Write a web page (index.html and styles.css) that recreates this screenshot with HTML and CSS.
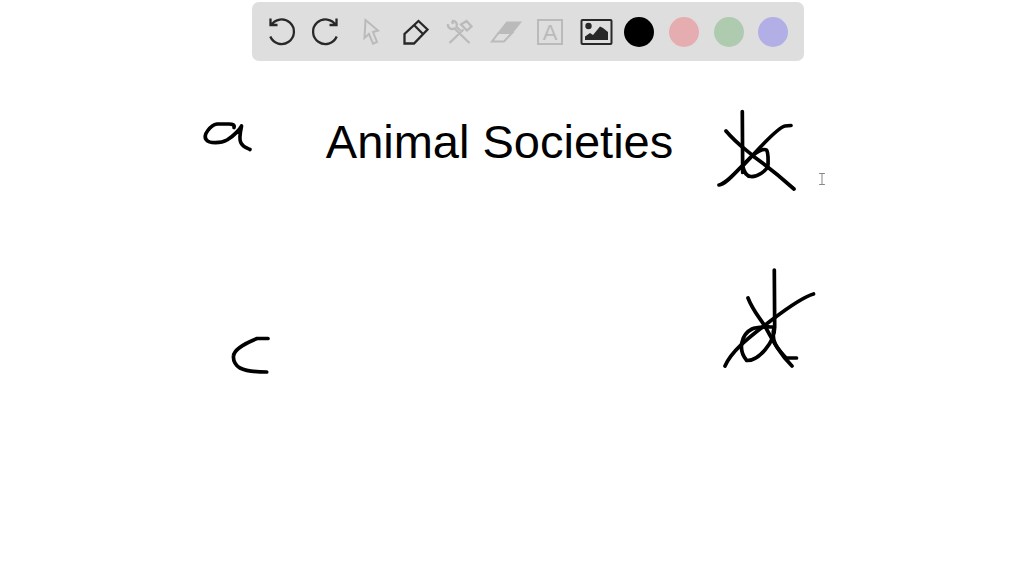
FILE: index.html
```html
<!DOCTYPE html>
<html lang="en">
<head>
<meta charset="utf-8">
<title>Animal Societies</title>
<link rel="stylesheet" href="styles.css">
</head>
<body>
<header class="top">
  <div class="toolbar" role="toolbar" aria-label="Drawing tools">
    <button class="tool" aria-label="Undo"><svg viewBox="-17 -17 34 34"><path class="bold" d="M-11.500-13.500V-7H-4.500M-11-6.500A12.300 12.300 0 1 1-11.700 4.500"/></svg></button>
    <button class="tool" aria-label="Redo"><svg viewBox="-16 -17 34 34"><path class="bold" d="M11.500-13.500V-7H4.500M11-6.500A12.300 12.300 0 1 0 11.700 4.500"/></svg></button>
    <button class="tool muted" aria-label="Select"><svg viewBox="-17 -17 34 34"><path d="M-5.500-12L7-1.500 2 0l4 10-4 1.600-4-9.600-4.500 4z"/></svg></button>
    <button class="tool" aria-label="Pen"><svg viewBox="-17 -17 34 34"><path class="bold" d="M-11.500 11.500V2L2.500-11 11.500-2.500-2 11.500zM-2-7L7 2"/></svg></button>
    <button class="tool muted" aria-label="Tools"><svg viewBox="-17 -17 34 34"><path class="bold" d="M-12-8C-12.500-4-9-2-5.500-3.500L9.500 11M-8-11C-4.500-11.500-2-8.500-3.500-5L.5-1.500M-8-11L-7-8M-10.500 11L3.500-2.500M1-7.500L6.500-11 11.500-5.500 7-1.500 4-4.500z"/></svg></button>
    <button class="tool muted" aria-label="Eraser"><svg viewBox="-17 -17 34 34"><path d="M-13 9.500L-6.500 1H7L-1 9.500z"/><path class="solid" d="M-8 1.500L1.500-10.500H17L7.500 1.500z"/></svg></button>
    <button class="tool muted" aria-label="Text"><svg viewBox="-17 -17 34 34"><path d="M-12-12H12V12H-12z"/><text class="letter" x="0" y="8">A</text></svg></button>
    <button class="tool" aria-label="Image"><svg viewBox="-18 -17 34 34"><rect x="-14.500" y="-12" width="30" height="24" rx="1"/><circle class="solid" cx="-7.500" cy="-6" r="3.200"/><path class="solid" d="M-11 8V4.500L-6 1-3 3 4-5.500 7-4 12 0V8z"/></svg></button>
    <button class="tool" aria-label="Black"><span class="swatch black"></span></button>
    <button class="tool" aria-label="Pink"><span class="swatch pink"></span></button>
    <button class="tool" aria-label="Green"><span class="swatch green"></span></button>
    <button class="tool" aria-label="Purple"><span class="swatch purple"></span></button>
  </div>
</header>
<main class="board">
  <h1 class="title">Animal Societies</h1>
</main>
<svg class="ink" viewBox="0 0 1024 576" role="img" aria-label="Handwritten a, crossed out b, c, crossed out d">
  <path d="M234 127.500Q235 124 229 124H217C211 125 202 135 206.500 140 209 143.500 221 143.500 227 140 234 136 240 129 241.500 126 240 133 239 140 241 143 243 147 246 147.500 250 149.500"/>
  <path d="M742.300 111.500L742.700 172.500M742.700 166C744 172 747 176.500 751 176.500 757 177 767 171 768 165Q768.500 153 766.500 150C763 148 757 152 752 156L742.700 166"/>
  <path d="M726 131C737 144 744 148 755 157.500Q775 172 794 189"/>
  <path d="M719 185C727 184 738 169 752 156 763 144 779 127 785 126L791 125.500"/>
  <path d="M268 338.500H257C248 342 234 349 233.500 356 233 361 236 366 240 368 246 371 252 372 266.700 372"/>
  <path d="M774.300 270L774.700 327C774.700 343 758 361 746.700 360.500 737 349 742 334 752 329 757 326.500 765 327 774.300 327 770 342 779 350 786 358H796.500"/>
  <path d="M748 298C753 311 760 318 766 328 773 341 780 354 792 366"/>
  <path d="M725 366C732 350 751 336 765 325 776 317 799 298 813.500 294"/>
  <path class="cursor" d="M819.500 173.500H824.500M822 174V184M819.500 184.500H824.500"/>
</svg>
</body>
</html>
```

FILE: styles.css
```css
* { box-sizing: border-box; }

body {
  position: relative;
  min-height: 100vh;
  margin: 0;
  overflow: hidden;
  background: #fff;
  color: #000;
  font-family: "Liberation Sans", Arial, sans-serif;
}

.top {
  display: flex;
  justify-content: center;
  padding: 2px 0 0 31px;
}

.toolbar {
  display: flex;
  align-items: center;
  justify-content: space-between;
  width: 54%;
  min-width: 552px;
  padding: 13px 13px 12px;
  border-radius: 7px;
  background: #dedede;
}

.tool {
  display: flex;
  align-items: center;
  justify-content: center;
  width: 34px;
  height: 34px;
  padding: 0;
  border: 0;
  background: none;
  color: #282828;
}

.tool svg {
  width: 34px;
  height: 34px;
  overflow: visible;
  fill: none;
  stroke: currentColor;
  stroke-width: 2;
}

.muted { color: #bababa; }
.tool .bold { stroke-width: 2.3; }
.tool .solid { fill: currentColor; stroke: none; }

.tool .letter {
  fill: currentColor;
  stroke: none;
  font-size: 22px;
  text-anchor: middle;
}

.swatch {
  width: 30px;
  height: 30px;
  border-radius: 50%;
}

.black { background: #000; }
.pink { background: #e5adb0; }
.green { background: #aecbaf; }
.purple { background: #b1afe5; }

.board { padding: 54px 25px 0 0; }

.title {
  margin: 0;
  font-size: 47px;
  font-weight: 400;
  line-height: 54px;
  text-align: center;
}

.ink {
  position: absolute;
  top: 0;
  left: 0;
  width: 100%;
  pointer-events: none;
  fill: none;
  stroke: #000;
  stroke-width: 3.7;
  stroke-linecap: round;
  stroke-linejoin: round;
}

.cursor {
  stroke: #888;
  stroke-width: 1;
}
```
